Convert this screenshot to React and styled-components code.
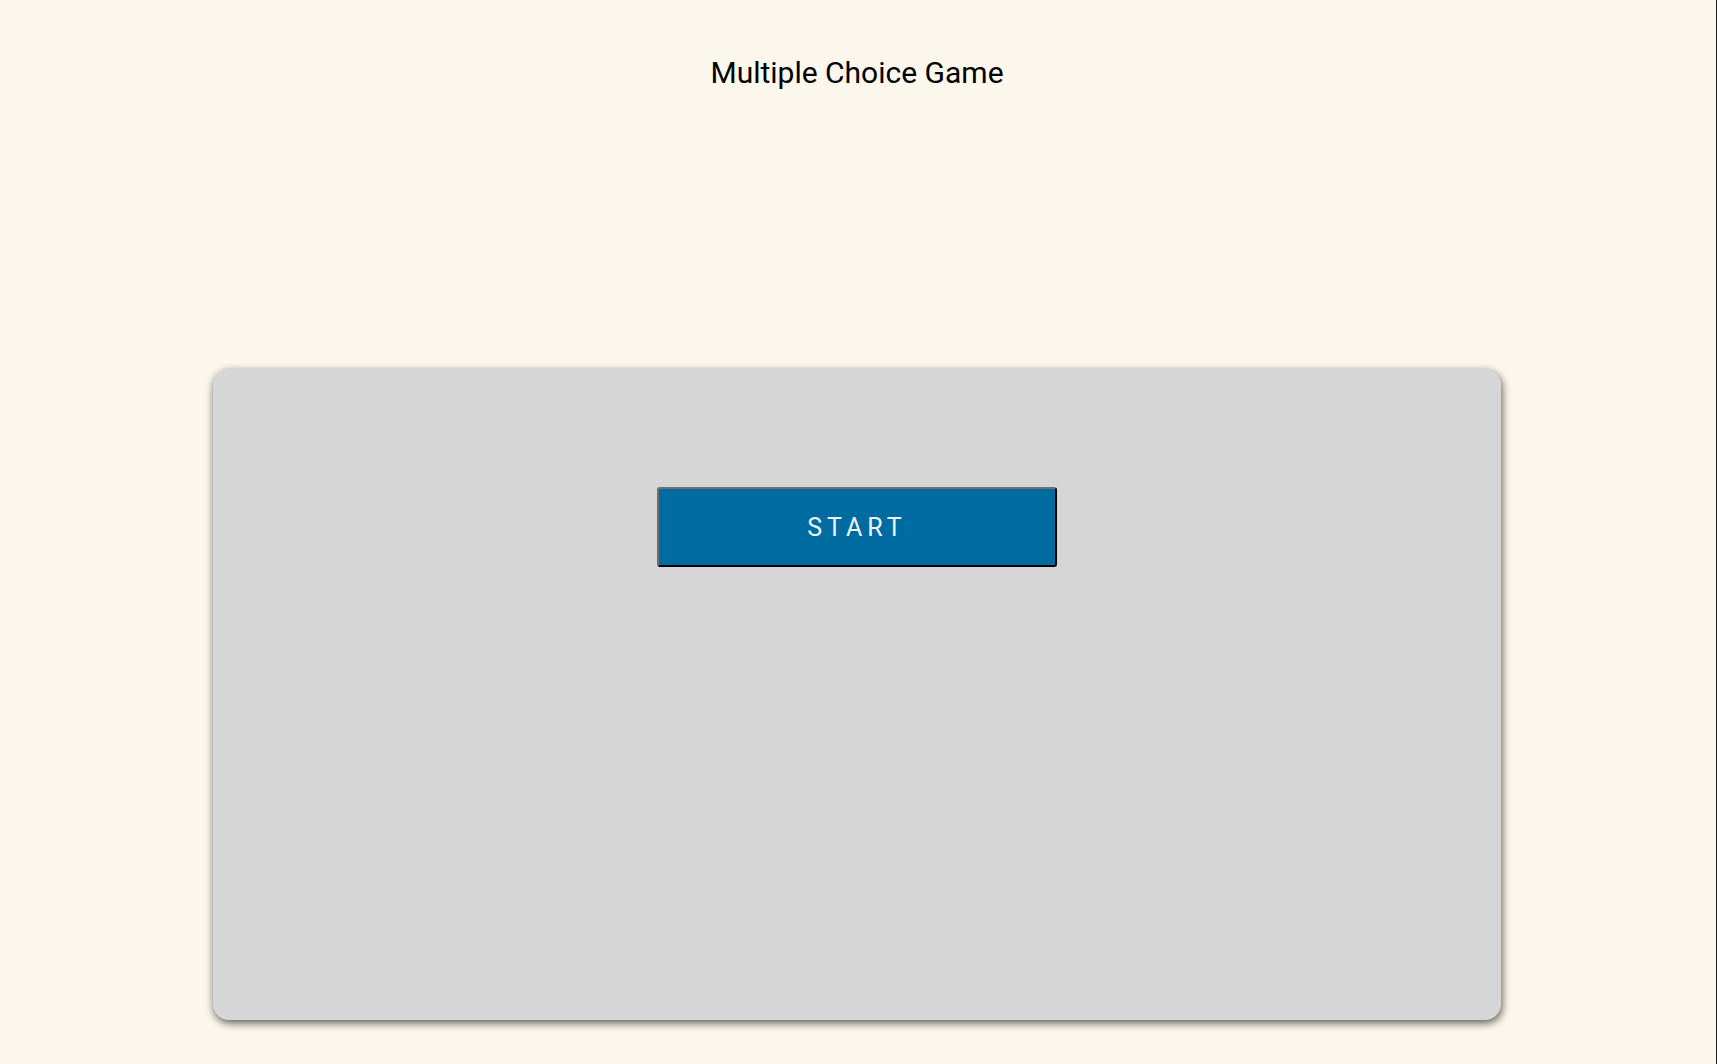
import React from "react";
import styled, { createGlobalStyle } from "styled-components";

const GlobalStyle = createGlobalStyle`
  html {
    background: #fcf7ec;
    box-shadow: inset -1px 0 0 #1e1e24;
    min-height: 100%;
  }
  body {
    margin: 0;
    font-family: Roboto, "Liberation Sans", sans-serif;
  }
`;

const Page = styled.div`
  display: flex;
  flex-direction: column;
  align-items: center;
  min-height: 1064px;
  padding-right: 3px;
`;

const Title = styled.h1`
  margin: 53px 0 0;
  font-size: 30px;
  line-height: 40px;
  font-weight: 400;
  color: #000;
`;

const Card = styled.div`
  margin-top: 276px;
  width: 1288px;
  height: 651px;
  box-sizing: border-box;
  background: #d6d6d6;
  border-radius: 16px;
  box-shadow: 1px 3px 8px rgba(0, 0, 0, 0.65);
  display: flex;
  flex-direction: column;
  align-items: center;
  padding-top: 118px;
`;

const StartButton = styled.button`
  width: 400px;
  height: 80px;
  background: #006ba1;
  color: #eef6fb;
  border: 2px outset #6f6f6f;
  border-right-color: #222;
  border-bottom-color: #222;
  border-radius: 3px;
  font-family: Roboto, "Liberation Sans", sans-serif;
  font-size: 25px;
  letter-spacing: 5px;
  padding: 0;
  cursor: pointer;
`;

export default function App() {
  return (
    <>
      <GlobalStyle />
      <Page>
        <Title>Multiple Choice Game</Title>
        <Card>
          <StartButton>START</StartButton>
        </Card>
      </Page>
    </>
  );
}
